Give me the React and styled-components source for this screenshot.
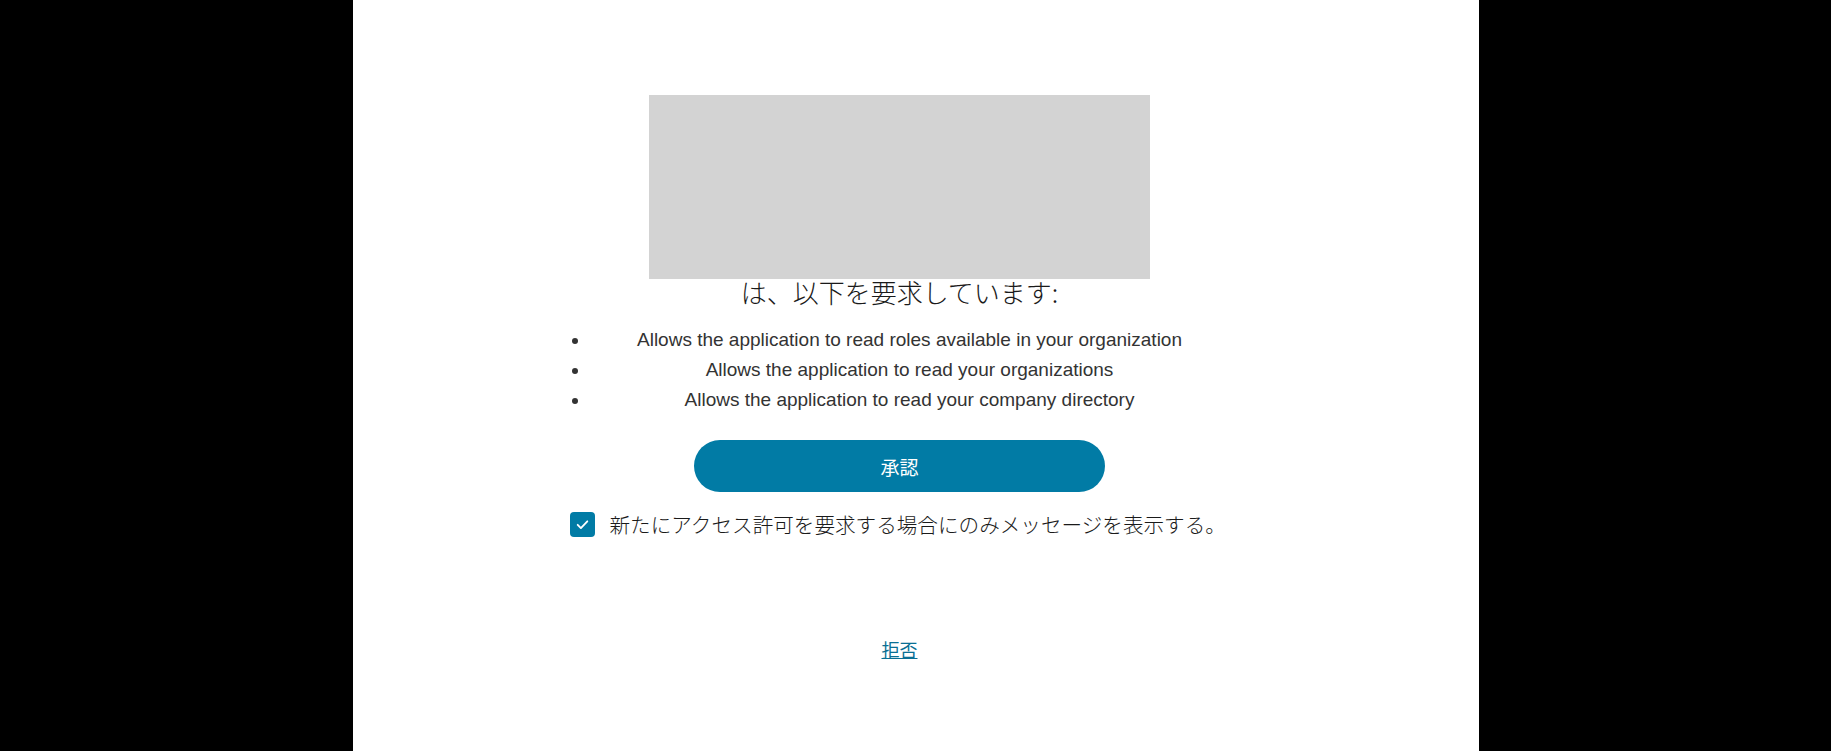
import styled, { createGlobalStyle } from 'styled-components';

const GlobalStyle = createGlobalStyle`
  html, body {
    margin: 0;
    padding: 0;
    background: #000;
  }
  #root {
    min-height: 100vh;
  }
`;

const Page = styled.div`
  display: flex;
  justify-content: center;
  min-height: 100vh;
  background: #000;
`;

const Panel = styled.main`
  width: 1126px;
  box-sizing: border-box;
  padding: 95px 32px 0 0;
  background: #fff;
  display: flex;
  flex-direction: column;
  align-items: center;
  font-family: "Noto Sans CJK JP", "Liberation Sans", sans-serif;
  color: #222;
`;

const LogoPlaceholder = styled.div`
  width: 501px;
  height: 184px;
  background: #d3d3d3;
`;

const Heading = styled.h1`
  margin: -4px 0 0;
  font-size: 26px;
  line-height: 34px;
  font-weight: 300;
  color: #1a1a1a;
`;

const Scopes = styled.ul`
  width: 660px;
  box-sizing: border-box;
  margin: 16px 0 0;
  padding: 0 0 0 20px;
  text-align: center;
  font-family: "Liberation Sans", Arial, sans-serif;
  font-size: 19px;
  color: #333;
`;

const Scope = styled.li`
  line-height: 30px;
`;

const ApproveButton = styled.button`
  margin-top: 25px;
  width: 411px;
  height: 52px;
  border: none;
  border-radius: 26px;
  background: #017ba5;
  color: #fff;
  font-family: "Noto Sans CJK JP", sans-serif;
  font-size: 19px;
  cursor: pointer;
`;

const CheckRow = styled.label`
  margin-top: 17px;
  width: 660px;
  display: flex;
  align-items: center;
  gap: 15px;
  font-size: 20.6px;
  line-height: 30px;
  font-weight: 300;
  white-space: nowrap;
  color: #1a1a1a;
  cursor: pointer;
`;

const CheckBox = styled.span`
  width: 25px;
  height: 25px;
  flex: none;
  border-radius: 4px;
  background: #017ba5;
  display: flex;
  align-items: center;
  justify-content: center;
`;

const DenyLink = styled.a`
  margin-top: 98px;
  font-size: 18px;
  line-height: 24px;
  color: #0a6f94;
  text-decoration: underline;
  cursor: pointer;
`;

const scopes = [
  'Allows the application to read roles available in your organization',
  'Allows the application to read your organizations',
  'Allows the application to read your company directory',
];

export default function App() {
  return (
    <>
      <GlobalStyle />
      <Page>
        <Panel>
          <LogoPlaceholder />
          <Heading>は、以下を要求しています:</Heading>
          <Scopes>
            {scopes.map((s) => (
              <Scope key={s}>{s}</Scope>
            ))}
          </Scopes>
          <ApproveButton>承認</ApproveButton>
          <CheckRow>
            <CheckBox>
              <svg width="15" height="15" viewBox="0 0 14 14" fill="none">
                <path d="M2.5 7.3l3 3 6-6.3" stroke="#fff" strokeWidth="1.7" strokeLinecap="round" strokeLinejoin="round" />
              </svg>
            </CheckBox>
            新たにアクセス許可を要求する場合にのみメッセージを表示する。
          </CheckRow>
          <DenyLink>拒否</DenyLink>
        </Panel>
      </Page>
    </>
  );
}
